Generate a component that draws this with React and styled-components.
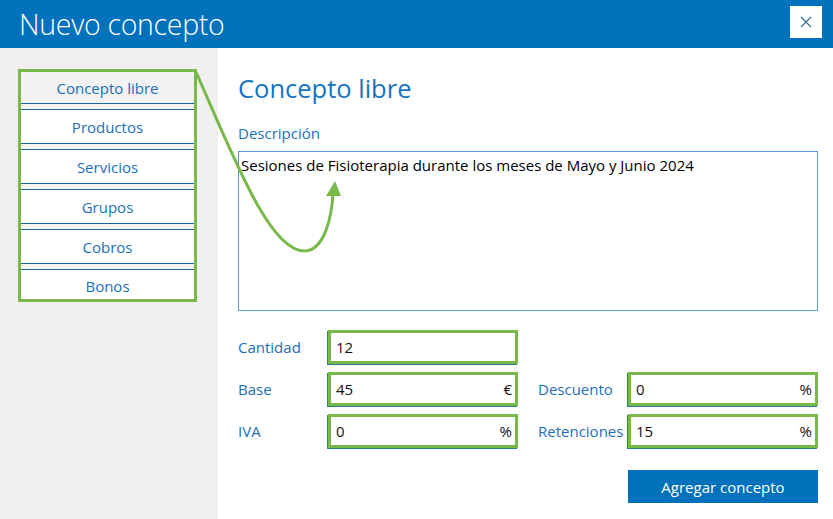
import React from "react";
import styled, { createGlobalStyle } from "styled-components";

const GlobalStyle = createGlobalStyle`
  html, body {
    margin: 0;
    padding: 0;
    background: #fff;
  }
  body {
    font-family: "Open Sans", "Noto Sans", sans-serif;
  }
`;

const Page = styled.div`
  width: 833px;
  height: 519px;
  display: flex;
  flex-direction: column;
  overflow: hidden;
`;

const Header = styled.header`
  height: 48px;
  background: #0071bb;
  display: flex;
  align-items: center;
  justify-content: space-between;
  padding: 0 11px 0 19px;
  flex-shrink: 0;
`;

const Title = styled.h1`
  margin: 0;
  font-weight: 300;
  font-size: 28.5px;
  color: #fff;
  letter-spacing: -0.3px;
`;

const CloseButton = styled.button`
  width: 32px;
  height: 32px;
  margin-top: -5px;
  border: none;
  background: #fff;
  display: flex;
  align-items: center;
  justify-content: center;
  padding: 0;
`;

const Body = styled.div`
  position: relative;
  flex: 1;
  display: flex;
`;

const Sidebar = styled.nav`
  width: 218px;
  flex-shrink: 0;
  background: #f0f0f0;
  padding: 21px 0 0 18px;
  box-sizing: border-box;
`;

const NavList = styled.ul`
  list-style: none;
  margin: 0;
  padding: 0;
  width: 179px;
  box-sizing: border-box;
  border: 3px solid #79b84a;
  background: #f3f3f3;
  display: flex;
  flex-direction: column;
  gap: 5px;
`;

const NavItem = styled.li`
  height: 35px;
  box-sizing: border-box;
  border-top: 1px solid #1c67a6;
  border-bottom: 1px solid #1c67a6;
  background: ${(p) => (p.$active ? "#f2f2f2" : "#fff")};
  color: #1b6fb6;
  font-size: 15px;
  display: flex;
  align-items: center;
  justify-content: center;

  &:first-child {
    border-top: none;
    height: 32px;
  }
  &:last-child {
    border-bottom: none;
    height: 30px;
    padding-top: 2px;
  }
`;

const Main = styled.main`
  width: 580px;
  padding: 22px 0 0 20px;
  display: flex;
  flex-direction: column;
`;

const Heading = styled.h2`
  margin: 0;
  font-weight: 400;
  font-size: 25.5px;
  line-height: 36px;
  color: #1674bf;
`;

const FieldLabel = styled.label`
  margin-top: 17px;
  font-size: 15px;
  line-height: 21px;
  color: #1b6fb6;
`;

const Description = styled.div`
  margin-top: 7px;
  height: 160px;
  box-sizing: border-box;
  border: 1px solid #5d9bd8;
  padding: 3px 2px;
  font-size: 15px;
  line-height: 20px;
  color: #000;
`;

const FormGrid = styled.div`
  margin-top: 19px;
  display: grid;
  grid-template-columns: 280px 280px;
  column-gap: 20px;
  row-gap: 8px;
`;

const FieldRow = styled.div`
  display: flex;
  align-items: center;
`;

const RowLabel = styled.span`
  width: 90px;
  font-size: 15px;
  color: #1b6fb6;
`;

const InputBox = styled.div`
  width: 190px;
  height: 34px;
  box-sizing: border-box;
  border: 3px solid #79b84a;
  box-shadow: -1px 1px 0 #2b7e8f;
  background: #fff;
  display: flex;
  align-items: center;
  justify-content: space-between;
  padding: 0 3px 0 5px;
  font-size: 15px;
  color: #111;
`;

const Actions = styled.div`
  margin-top: 22px;
  display: flex;
  justify-content: flex-end;
`;

const PrimaryButton = styled.button`
  width: 190px;
  height: 33px;
  border: none;
  background: #0071bb;
  color: #fff;
  font-family: inherit;
  font-size: 15px;
`;

const Overlay = styled.svg`
  position: absolute;
  left: 0;
  top: -48px;
  pointer-events: none;
`;

function Field({ label, value, unit }) {
  return (
    <FieldRow>
      <RowLabel>{label}</RowLabel>
      <InputBox>
        <span>{value}</span>
        <span>{unit}</span>
      </InputBox>
    </FieldRow>
  );
}

const tabs = ["Concepto libre", "Productos", "Servicios", "Grupos", "Cobros", "Bonos"];

export default function App() {
  return (
    <Page>
      <GlobalStyle />
      <Header>
        <Title>Nuevo concepto</Title>
        <CloseButton aria-label="Cerrar">
          <svg width="12" height="12" viewBox="0 0 12 12">
            <path d="M1 1 L11 11 M11 1 L1 11" stroke="#2d6d9f" strokeWidth="1.1" />
          </svg>
        </CloseButton>
      </Header>
      <Body>
        <Sidebar>
          <NavList>
            {tabs.map((t, i) => (
              <NavItem key={t} $active={i === 0}>
                {t}
              </NavItem>
            ))}
          </NavList>
        </Sidebar>
        <Main>
          <Heading>Concepto libre</Heading>
          <FieldLabel>Descripción</FieldLabel>
          <Description>
            Sesiones de Fisioterapia durante los meses de Mayo y Junio 2024
          </Description>
          <FormGrid>
            <Field label="Cantidad" value="12" />
            <div />
            <Field label="Base" value="45" unit="€" />
            <Field label="Descuento" value="0" unit="%" />
            <Field label="IVA" value="0" unit="%" />
            <Field label="Retenciones" value="15" unit="%" />
          </FormGrid>
          <Actions>
            <PrimaryButton>Agregar concepto</PrimaryButton>
          </Actions>
        </Main>
        <Overlay width="833" height="519">
          <path
            d="M196 72 C 235 160 270 252 305 251 C 325 250 332 215 333 193"
            fill="none"
            stroke="#79b84a"
            strokeWidth="3"
          />
          <polygon points="335,181 326,196 341,196" fill="#79b84a" />
        </Overlay>
      </Body>
    </Page>
  );
}
